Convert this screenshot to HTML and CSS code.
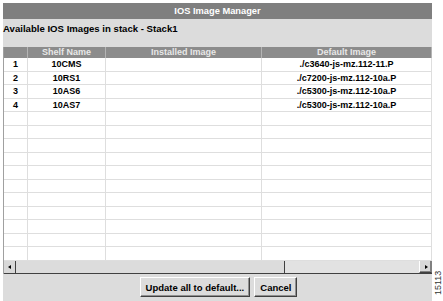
FILE: index.html
```html
<!DOCTYPE html>
<html>
<head>
<meta charset="utf-8">
<link rel="stylesheet" href="styles.css">
</head>
<body>
<div class="frame">
  <div class="window">
    <div class="titlebar">IOS Image Manager</div>
    <div class="caption">Available IOS Images in stack - Stack1</div>
    <div class="table">
      <div class="row head">
        <div class="c num"></div>
        <div class="c shelf">Shelf Name</div>
        <div class="c inst">Installed Image</div>
        <div class="c def">Default Image</div>
      </div>
      <div class="body">
        <div class="row"><div class="c num">1</div><div class="c shelf">10CMS</div><div class="c inst"></div><div class="c def">./c3640-js-mz.112-11.P</div></div>
        <div class="row"><div class="c num">2</div><div class="c shelf">10RS1</div><div class="c inst"></div><div class="c def">./c7200-js-mz.112-10a.P</div></div>
        <div class="row"><div class="c num">3</div><div class="c shelf">10AS6</div><div class="c inst"></div><div class="c def">./c5300-js-mz.112-10a.P</div></div>
        <div class="row"><div class="c num">4</div><div class="c shelf">10AS7</div><div class="c inst"></div><div class="c def">./c5300-js-mz.112-10a.P</div></div>
        <div class="row"><div class="c num"></div><div class="c shelf"></div><div class="c inst"></div><div class="c def"></div></div>
        <div class="row"><div class="c num"></div><div class="c shelf"></div><div class="c inst"></div><div class="c def"></div></div>
        <div class="row"><div class="c num"></div><div class="c shelf"></div><div class="c inst"></div><div class="c def"></div></div>
        <div class="row"><div class="c num"></div><div class="c shelf"></div><div class="c inst"></div><div class="c def"></div></div>
        <div class="row"><div class="c num"></div><div class="c shelf"></div><div class="c inst"></div><div class="c def"></div></div>
        <div class="row"><div class="c num"></div><div class="c shelf"></div><div class="c inst"></div><div class="c def"></div></div>
        <div class="row"><div class="c num"></div><div class="c shelf"></div><div class="c inst"></div><div class="c def"></div></div>
        <div class="row"><div class="c num"></div><div class="c shelf"></div><div class="c inst"></div><div class="c def"></div></div>
        <div class="row"><div class="c num"></div><div class="c shelf"></div><div class="c inst"></div><div class="c def"></div></div>
        <div class="row"><div class="c num"></div><div class="c shelf"></div><div class="c inst"></div><div class="c def"></div></div>
        <div class="row"><div class="c num"></div><div class="c shelf"></div><div class="c inst"></div><div class="c def"></div></div>
      </div>
      <div class="scrollbar">
        <div class="sbtn"><svg width="6" height="6" viewBox="0 0 6 6"><polygon points="4,1 1,3 4,5" fill="#000"/></svg></div>
        <div class="thumb"></div>
        <div class="track"></div>
        <div class="sbtn right"><svg width="6" height="6" viewBox="0 0 6 6"><polygon points="2,1 5,3 2,5" fill="#000"/></svg></div>
      </div>
    </div>
    <div class="buttons">
      <button class="btn">Update all to default...</button>
      <button class="btn">Cancel</button>
    </div>
  </div>
  <div class="side"><span class="fig">15113</span></div>
</div>
</body>
</html>
```

FILE: styles.css
```css
html, body {
  margin: 0;
  padding: 0;
  background: #fff;
}
body {
  font-family: "Liberation Sans", Arial, sans-serif;
  font-size: 9px;
  font-weight: bold;
  color: #000;
}
.frame {
  display: flex;
  padding: 3px 0 0 3px;
  height: 298px;
}
.window {
  width: 429px;
  display: flex;
  flex-direction: column;
  background: #dcdcdc;
}
.titlebar {
  height: 16px;
  background: #7f7f7f;
  color: #fff;
  text-align: center;
  line-height: 16px;
  font-size: 9.3px;
}
.caption {
  height: 28px;
  padding-top: 1px;
  box-sizing: border-box;
  font-size: 9.6px;
  line-height: 17px;
}
.table {
  display: flex;
  flex-direction: column;
  background: #fff;
  border-left: 1px solid #a0a0a0;
}
.row {
  display: grid;
  grid-template-columns: 24px 78px 156px 1fr;
  border-bottom: 1px solid #dedede;
  box-sizing: border-box;
}
.c {
  text-align: center;
  border-right: 1px solid #dedede;
  overflow: hidden;
  white-space: nowrap;
}
.head {
  height: 11px;
  background: #8c8c8c;
  color: #e8e8e8;
  line-height: 11px;
  border-bottom: none;
}
.head .c {
  border-right: 1px solid #b4b4b4;
}
.body {
  display: grid;
  grid-template-rows: repeat(15, 1fr);
  height: 203px;
}
.body .row {
  line-height: 12px;
}
.scrollbar {
  height: 12px;
  display: flex;
  background: #d8d8d8;
  border-bottom: 1px solid #404040;
  box-sizing: content-box;
}
.sbtn {
  width: 11px;
  display: flex;
  align-items: center;
  justify-content: center;
  background: #d8d8d8;
  border-right: 1px solid #404040;
}
.sbtn.right {
  border-right: 1px solid #808080;
  border-left: 1px solid #fff;
  border-bottom: 1px solid #404040;
  box-shadow: inset -1px -1px 0 #808080;
  height: 11px;
}
.thumb {
  width: 268px;
  background: #dcdcdc;
  border-right: 1px solid #404040;
}
.track {
  flex: 1;
  background: #e2e2e2;
}
.buttons {
  flex: 1;
  display: flex;
  justify-content: center;
  align-items: flex-start;
  gap: 4px;
  padding-top: 3px;
  padding-left: 2px;
}
.btn {
  font-family: "Liberation Sans", Arial, sans-serif;
  font-weight: bold;
  font-size: 9.5px;
  height: 20px;
  padding: 0 5px;
  background: #dcdcdc;
  color: #000;
  border: 1px solid;
  border-color: #fff #404040 #404040 #fff;
  box-shadow: inset -1px -1px 0 #909090;
}
.side {
  flex: 1;
  position: relative;
}
.fig {
  position: absolute;
  transform: rotate(-90deg);
  transform-origin: left top;
  font-size: 9px;
  font-weight: normal;
  color: #333;
  left: 1px;
  top: 292px;
}
```
